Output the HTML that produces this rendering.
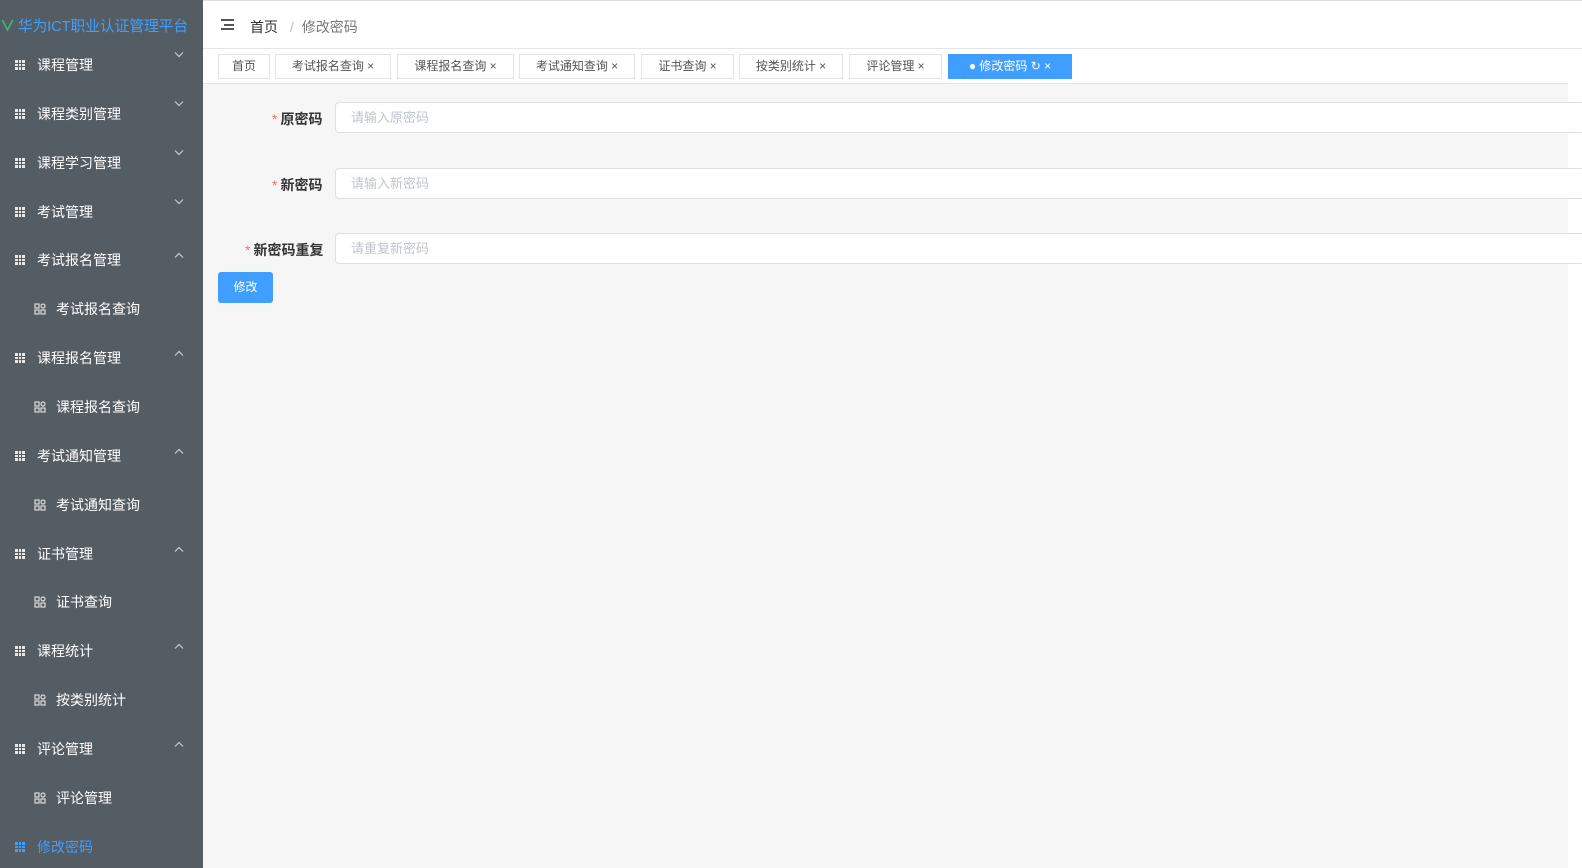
<!DOCTYPE html>
<html><head><meta charset="utf-8"><style>
*{box-sizing:border-box;margin:0;padding:0}
body{width:1582px;height:868px;overflow:hidden;background:#fff;font-family:"Liberation Sans","Noto Sans CJK SC",sans-serif;font-size:14px;position:relative}
#side{position:absolute;left:0;top:0;width:203px;height:868px;background:#545c64}
.logo{position:absolute;left:0;top:15px;font-size:15px;color:#409eff;white-space:nowrap;letter-spacing:-0.3px}
.logo b{color:#42b983;font-weight:bold;margin-right:3px}
.mi{position:absolute;left:0;width:203px;height:20px;color:#fff;font-size:14px;line-height:20px}
.mi .ic{position:absolute;left:15px;top:5px;width:10px;height:10px;background:
linear-gradient(#545c64,#545c64) 3px 0/1px 10px no-repeat,linear-gradient(#545c64,#545c64) 6px 0/1px 10px no-repeat,linear-gradient(#545c64,#545c64) 0 3px/10px 1px no-repeat,linear-gradient(#545c64,#545c64) 0 6px/10px 1px no-repeat;background-color:#e8e8e8}
.mi .t{position:absolute;left:37px}
.mi .ar{position:absolute;left:174px;top:0;font-size:11px;color:#ccc}
.mi.sub .t{left:56px}
.mi.sub .ic2{position:absolute;left:34px;top:4px;width:12px;height:12px}
.mi.act{color:#409eff}.mi.act .ic{background-color:#409eff}
#top{position:absolute;left:203px;top:0;right:0;height:49px;border-top:1px solid #ddd;border-bottom:1px solid #e6e6e6;background:#fff}
#tabs{position:absolute;left:203px;top:49px;width:1365px;height:35px;border-bottom:1px solid #e4e4e4;background:#fff}
.tab{position:absolute;top:5px;height:25px;border:1px solid #e4e4e4;background:#fff;color:#555;font-size:12px;line-height:23px;text-align:center;white-space:nowrap}
#main{position:absolute;left:203px;top:84px;width:1365px;height:784px;background:#f6f6f6}
.lb{position:absolute;font-size:14px;font-weight:bold;color:#333;white-space:nowrap}
.lb i{color:#f56c6c;font-style:normal;font-weight:normal;margin-right:3px}
.in{position:absolute;left:335px;width:1250px;height:31px;border:1px solid #dcdfe6;border-radius:4px;background:#fff;color:#c0c4cc;font-size:13px;line-height:29px;padding-left:15px}
</style></head><body>
<div id="side">
<div class="logo"><b>∨</b>华为ICT职业认证管理平台</div>
</div>
<div id="top">
<div style="position:absolute;left:18px;top:18px;width:13px;height:11px;border-top:2px solid #555;border-bottom:2px solid #555"><div style="margin-top:2.5px;height:2px;background:#555;margin-left:3px"></div></div>
<div style="position:absolute;left:47px;top:16px;font-size:14px;color:#303133">首页 <span style="color:#bbb;margin:0 8px">/</span><span style="color:#777">修改密码</span></div>
</div>
<div id="tabs">
<div class="tab" style="left:15px;width:52px">首页</div>
<div class="tab" style="left:72px;width:116px">考试报名查询 ×</div>
<div class="tab" style="left:194px;width:117px">课程报名查询 ×</div>
<div class="tab" style="left:316px;width:116px">考试通知查询 ×</div>
<div class="tab" style="left:438px;width:93px">证书查询 ×</div>
<div class="tab" style="left:536px;width:104px">按类别统计 ×</div>
<div class="tab" style="left:646px;width:93px">评论管理 ×</div>
<div class="tab" style="left:745px;width:124px;background:#409eff;border-color:#409eff;color:#fff">● 修改密码 ↻ ×</div>
</div>
<div id="main"></div>
<div class="lb" style="top:109px;left:272px"><i>*</i>原密码</div>
<div class="in" style="top:102px">请输入原密码</div>
<div class="lb" style="top:175px;left:272px"><i>*</i>新密码</div>
<div class="in" style="top:168px">请输入新密码</div>
<div class="lb" style="top:240px;left:245px"><i>*</i>新密码重复</div>
<div class="in" style="top:233px">请重复新密码</div>
<div style="position:absolute;left:218px;top:272px;width:55px;height:31px;background:#409eff;border-radius:3px;color:#fff;font-size:12px;line-height:31px;text-align:center">修改</div>
<script>
var items=[["课程管理",0,"v"],["课程类别管理",0,"v"],["课程学习管理",0,"v"],["考试管理",0,"v"],["考试报名管理",0,"^"],["考试报名查询",1],["课程报名管理",0,"^"],["课程报名查询",1],["考试通知管理",0,"^"],["考试通知查询",1],["证书管理",0,"^"],["证书查询",1],["课程统计",0,"^"],["按类别统计",1],["评论管理",0,"^"],["评论管理",1],["修改密码",2]];
var h="";items.forEach(function(it,i){var top=Math.round(55+i*48.85);
if(it[1]==1)h+='<div class="mi sub" style="top:'+top+'px"><svg class="ic2" viewBox="0 0 12 12" fill="none" stroke="#ddd" stroke-width="1.2"><rect x="1" y="1" width="4" height="4"/><rect x="1" y="7" width="4" height="4"/><rect x="7" y="7" width="4" height="4"/><circle cx="9" cy="3" r="2"/></svg><span class="t">'+it[0]+'</span></div>';
else h+='<div class="mi'+(it[1]==2?' act':'')+'" style="top:'+top+'px"><span class="ic"></span><span class="t">'+it[0]+'</span>'+(it[2]?'<svg class="ar" style="top:'+(it[2]=="^"?2:-3)+'px" width="10" height="6" viewBox="0 0 10 6" fill="none" stroke="#ccc" stroke-width="1.2">'+(it[2]=="^"?'<path d="M1 5.5L5 1.5L9 5.5"/>':'<path d="M1 0.5L5 4.5L9 0.5"/>')+'</svg>':'')+'</div>';});
document.getElementById("side").insertAdjacentHTML("beforeend",h);
</script>
</body></html>
